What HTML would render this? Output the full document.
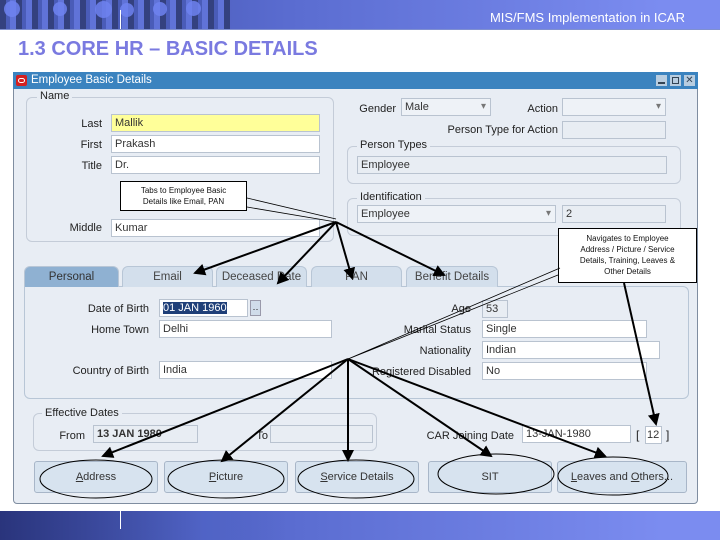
<!DOCTYPE html>
<html><head><meta charset="utf-8"><style>
*{margin:0;padding:0;box-sizing:border-box}
body{width:720px;height:540px;position:relative;overflow:hidden;background:#fff;font-family:"Liberation Sans",sans-serif;font-size:11px;color:#222}
.a{position:absolute}
.banner{background:linear-gradient(90deg,#3a4aa0 0%,#5a6cd0 40%,#7b8cf0 92%,#7b8cf0 100%)}
.dot{position:absolute;border-radius:50%;background:#6f82f0;opacity:.85}
.f{position:absolute;background:#fff;border:1px solid #b9c3d0;height:18px;padding:0 3px;line-height:16px;font-size:11px;color:#333;white-space:nowrap}
.ro{background:#e8edf3}
.l{position:absolute;text-align:right;font-size:11px;color:#222;white-space:nowrap}
.g{position:absolute;border:1px solid #c4ccd8;border-radius:6px}
.gl{position:absolute;background:#e8edf4;padding:0 3px;font-size:11px}
.tab{position:absolute;top:266px;height:21px;background:#d3dfec;border:1px solid #b8c6d6;border-bottom:none;border-radius:6px 6px 0 0;text-align:center;line-height:20px;font-size:11.5px;color:#444}
.btn{position:absolute;top:461px;height:32px;background:#d7e3ef;border:1px solid #a8b6c8;border-radius:3px;text-align:center;line-height:31px;font-size:11px;color:#333}
.dd::after{content:"▾";position:absolute;right:4px;top:0;color:#777;font-size:10px}
.call{position:absolute;background:#fff;border:1px solid #000;text-align:center;font-size:8px;line-height:11px;color:#111}
</style></head><body>
<div class="a banner" style="left:0;top:0;width:720px;height:29px">
<div class="a" style="left:0;top:0;width:230px;height:29px;background:repeating-linear-gradient(90deg,#34417f 0 6px,#4a5cb8 6px 10px,#6073d8 10px 16px)"></div>
<div class="dot" style="left:4px;top:1px;width:16px;height:16px"></div>
<div class="dot" style="left:53px;top:2px;width:14px;height:14px"></div>
<div class="dot" style="left:95px;top:1px;width:17px;height:17px"></div>
<div class="dot" style="left:120px;top:3px;width:14px;height:14px"></div>
<div class="dot" style="left:153px;top:2px;width:14px;height:14px"></div>
<div class="dot" style="left:186px;top:1px;width:15px;height:15px"></div>
<div class="a" style="left:120px;top:10px;width:1px;height:19px;background:#fff"></div>
<div class="a" style="right:35px;top:10px;color:#fff;font-size:13px">MIS/FMS Implementation in ICAR</div>
</div>
<div class="a" style="left:0;top:29px;width:720px;height:1px;background:#8090d0"></div>
<div class="a" style="left:18px;top:38px;font-size:20px;font-weight:bold;color:#7a7ae0">1.3 CORE HR – BASIC DETAILS</div>

<div class="a" style="left:13px;top:72px;width:685px;height:432px;background:#e8edf4;border:1px solid #7f8da0;border-radius:0 0 4px 4px"></div>
<div class="a" style="left:13px;top:72px;width:685px;height:17px;background:#3b83bf"></div>
<div class="a" style="left:16px;top:75px;width:11px;height:11px;background:#d42020;border-radius:2px"><div class="a" style="left:2px;top:3px;width:7px;height:5px;border:1.5px solid #fff;border-radius:3px"></div></div>
<div class="a" style="left:31px;top:74px;color:#fff;font-size:11.5px">Employee Basic Details</div>
<div class="a" style="left:656px;top:75px;width:11px;height:11px;background:#b8cde0"><div class="a" style="left:2px;top:7px;width:7px;height:2px;background:#345"></div></div>
<div class="a" style="left:670px;top:75px;width:11px;height:11px;background:#b8cde0"><div class="a" style="left:2px;top:2px;width:7px;height:7px;border:1.5px solid #345"></div></div>
<div class="a" style="left:684px;top:75px;width:11px;height:11px;background:#b8cde0;font-size:10px;line-height:11px;text-align:center;color:#345">✕</div>

<div class="g" style="left:26px;top:97px;width:308px;height:145px"></div>
<div class="gl" style="left:37px;top:90px">Name</div>
<div class="l" style="left:60px;top:118px;width:42px">Last</div><div class="f" style="left:111px;top:114px;width:209px;background:#ffff99">Mallik</div>
<div class="l" style="left:60px;top:139px;width:42px">First</div><div class="f" style="left:111px;top:135px;width:209px">Prakash</div>
<div class="l" style="left:60px;top:160px;width:42px">Title</div><div class="f" style="left:111px;top:156px;width:209px">Dr.</div>
<div class="l" style="left:50px;top:222px;width:52px">Middle</div><div class="f" style="left:111px;top:219px;width:209px">Kumar</div>

<div class="l" style="left:350px;top:103px;width:46px">Gender</div><div class="f dd" style="left:401px;top:98px;width:90px;background:#eef2f7">Male</div>
<div class="l" style="left:500px;top:103px;width:58px">Action</div><div class="f dd" style="left:562px;top:98px;width:104px;background:#eef2f7"></div>
<div class="l" style="left:420px;top:124px;width:138px">Person Type for Action</div><div class="f ro" style="left:562px;top:121px;width:104px"></div>
<div class="g" style="left:347px;top:146px;width:334px;height:38px"></div>
<div class="gl" style="left:357px;top:139px">Person Types</div>
<div class="f ro" style="left:357px;top:156px;width:310px">Employee</div>
<div class="g" style="left:347px;top:198px;width:334px;height:38px"></div>
<div class="gl" style="left:357px;top:191px">Identification</div>
<div class="f dd" style="left:357px;top:205px;width:199px;background:#eef2f7">Employee</div>
<div class="f ro" style="left:562px;top:205px;width:104px">2</div>

<div class="a" style="left:24px;top:286px;width:665px;height:113px;border:1px solid #b8c6d6;border-radius:0 6px 6px 6px;background:#e8edf4"></div>
<div class="tab" style="left:24px;width:95px;background:#8fb1d2;color:#333">Personal</div>
<div class="tab" style="left:122px;width:91px">Email</div>
<div class="tab" style="left:216px;width:91px">Deceased Date</div>
<div class="tab" style="left:311px;width:91px">PAN</div>
<div class="tab" style="left:406px;width:92px">Benefit Details</div>

<div class="l" style="left:60px;top:303px;width:89px">Date of Birth</div><div class="f" style="left:159px;top:299px;width:89px"><span style="background:#1f3f78;color:#fff">01 JAN 1960</span></div>
<div class="a" style="left:250px;top:300px;width:11px;height:16px;background:#d0dcea;border:1px solid #99a;font-size:9px;text-align:center;line-height:12px">‥</div>
<div class="l" style="left:60px;top:324px;width:89px">Home Town</div><div class="f" style="left:159px;top:320px;width:173px">Delhi</div>
<div class="l" style="left:40px;top:365px;width:109px">Country of Birth</div><div class="f" style="left:159px;top:361px;width:173px">India</div>
<div class="l" style="left:400px;top:303px;width:71px">Age</div><div class="f ro" style="left:482px;top:300px;width:26px">53</div>
<div class="l" style="left:340px;top:324px;width:131px">Marital Status</div><div class="f" style="left:482px;top:320px;width:165px">Single</div>
<div class="l" style="left:340px;top:345px;width:131px">Nationality</div><div class="f" style="left:482px;top:341px;width:178px">Indian</div>
<div class="l" style="left:340px;top:366px;width:131px">Registered Disabled</div><div class="f" style="left:482px;top:362px;width:165px">No</div>

<div class="g" style="left:33px;top:413px;width:344px;height:38px"></div>
<div class="gl" style="left:42px;top:407px">Effective Dates</div>
<div class="l" style="left:50px;top:430px;width:35px">From</div><div class="f ro" style="left:93px;top:425px;width:105px;font-weight:bold">13 JAN 1980</div>
<div class="l" style="left:250px;top:430px;width:18px">To</div><div class="f ro" style="left:270px;top:425px;width:103px"></div>
<div class="l" style="left:400px;top:430px;width:114px">CAR Joining Date</div><div class="f" style="left:522px;top:425px;width:109px">13-JAN-1980</div>
<div class="a" style="left:636px;top:428px;font-size:12px">[</div><div class="f" style="left:645px;top:426px;width:17px;padding:0 1px">12</div><div class="a" style="left:666px;top:428px;font-size:12px">]</div>

<div class="btn" style="left:34px;width:124px"><u>A</u>ddress</div>
<div class="btn" style="left:164px;width:124px"><u>P</u>icture</div>
<div class="btn" style="left:295px;width:124px"><u>S</u>ervice Details</div>
<div class="btn" style="left:428px;width:124px">SIT</div>
<div class="btn" style="left:557px;width:130px"><u>L</u>eaves and <u>O</u>thers...</div>

<div class="call" style="left:120px;top:181px;width:127px;height:30px;padding-top:3px">Tabs to Employee Basic<br>Details like Email, PAN</div>
<div class="call" style="left:558px;top:228px;width:139px;height:55px;padding-top:4px">Navigates to Employee<br>Address / Picture / Service<br>Details, Training, Leaves &amp;<br>Other Details</div>

<svg class="a" style="left:0;top:0" width="720" height="540" viewBox="0 0 720 540">
<defs><marker id="ar" markerWidth="6" markerHeight="6" refX="5" refY="3" orient="auto"><path d="M0,0 L6,3 L0,6 z" fill="#000"/></marker></defs>
<g stroke="#000" fill="none">
<path d="M247,198 L336,219 M247,207 L336,222" stroke-width="0.8"/>
<g stroke-width="2" marker-end="url(#ar)">
<line x1="336" y1="222" x2="195" y2="273"/>
<line x1="336" y1="222" x2="278" y2="283"/>
<line x1="336" y1="222" x2="352" y2="278"/>
<line x1="336" y1="222" x2="444" y2="275"/>
<line x1="348" y1="359" x2="103" y2="456"/>
<line x1="348" y1="359" x2="222" y2="461"/>
<line x1="348" y1="359" x2="348" y2="460"/>
<line x1="348" y1="359" x2="491" y2="456"/>
<line x1="348" y1="359" x2="605" y2="456"/>
<line x1="624" y1="283" x2="656" y2="424"/>
</g>
<path d="M348,359 L560,268 M348,359 L558,275" stroke-width="0.8"/>
<g stroke-width="1">
<ellipse cx="96" cy="479" rx="56" ry="19"/>
<ellipse cx="226" cy="479" rx="58" ry="19"/>
<ellipse cx="356" cy="479" rx="58" ry="19"/>
<ellipse cx="496" cy="474" rx="58" ry="20"/>
<ellipse cx="613" cy="476" rx="55" ry="19"/>
</g></g></svg>

<div class="a banner" style="left:0;top:511px;width:720px;height:29px">
<div class="a" style="left:0;top:0;width:290px;height:29px;background:linear-gradient(90deg,rgba(40,50,120,.9),rgba(80,100,200,.6) 70%,rgba(123,140,240,0));"></div>
<div class="a" style="left:120px;top:0;width:1px;height:18px;background:#fff"></div>
</div>
</body></html>
